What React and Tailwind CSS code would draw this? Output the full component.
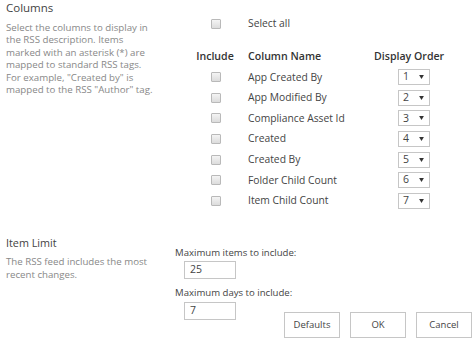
import React from 'react'

const columns = [
  'App Created By',
  'App Modified By',
  'Compliance Asset Id',
  'Created',
  'Created By',
  'Folder Child Count',
  'Item Child Count',
]

const Check = () => (
  <span className="block w-[10px] h-[10px] border border-[#b9b9b9] bg-gradient-to-b from-[#f4f4f4] to-[#dcdcdc] rounded-[1px]" />
)

const OrderSelect = ({ value }) => (
  <div className="w-[32px] h-[16px] border border-[#c6c6c6] bg-white flex items-center justify-between pl-[4px] pr-[5px] text-[10.5px] text-[#444]">
    <span>{value}</span>
    <svg width="5" height="4" viewBox="0 0 6 5">
      <path d="M0 0 L6 0 L3 5 Z" fill="#333" />
    </svg>
  </div>
)

const TextBox = ({ value }) => (
  <div className="w-[52px] h-[18px] border border-[#c6c6c6] bg-white pl-[5px] flex items-center text-[10.5px] text-[#444]">
    {value}
  </div>
)

const Btn = ({ children }) => (
  <button className="w-[56px] h-[26px] border border-[#c6c6c6] bg-white text-[9.5px] text-[#444]">
    {children}
  </button>
)

export default function App() {
  return (
    <div className="w-[475px] h-[342px] bg-white overflow-hidden text-[#444]" style={{ fontFamily: '"Open Sans", "Noto Sans", sans-serif' }}>
      {/* Columns section */}
      <div className="flex">
        <div className="w-[170px] pl-[6px]">
          <h2 className="text-[11.5px] leading-[16px]">Columns</h2>
          <p className="mt-[6px] text-[9.7px] leading-[12.4px] text-[#888] whitespace-nowrap">
            Select the columns to display in<br />
            the RSS description. Items<br />
            marked with an asterisk (*) are<br />
            mapped to standard RSS tags.<br />
            For example, "Created by" is<br />
            mapped to the RSS "Author" tag.
          </p>
        </div>
        <div className="flex-1 pt-[14px]">
          <div className="flex items-center h-[20px]">
            <div className="pl-[41px] w-[78px]"><Check /></div>
            <span className="text-[10.3px]">Select all</span>
          </div>
          <div className="flex items-center h-[20px] mt-[13px] text-[10.6px] font-semibold text-[#333]">
            <div className="ml-[15px] w-[60px] text-center">Include</div>
            <div className="ml-[3px] w-[126px]">Column Name</div>
            <div className="w-[80px]">Display Order</div>
          </div>
          {columns.map((c, i) => (
            <div key={c} className="flex items-center h-[20.6px] text-[10.3px]">
              <div className="pl-[41px] w-[78px]"><Check /></div>
              <div className="w-[150px]">{c}</div>
              <OrderSelect value={i + 1} />
            </div>
          ))}
        </div>
      </div>

      {/* Item limit section */}
      <div className="flex mt-[23px]">
        <div className="w-[170px] pl-[6px] pt-[1px]">
          <h2 className="text-[10.8px] leading-[15px]">Item Limit</h2>
          <p className="mt-[6px] text-[9.7px] leading-[12.4px] text-[#888] whitespace-nowrap">
            The RSS feed includes the most<br />
            recent changes.
          </p>
        </div>
        <div className="flex-1 pl-[5px] pt-[11px]">
          <div className="text-[9.6px] leading-[15px]">Maximum items to include:</div>
          <div className="pl-[9px] mt-[1px]"><TextBox value="25" /></div>
          <div className="text-[9.6px] leading-[15px] mt-[6px]">Maximum days to include:</div>
          <div className="flex items-start">
            <div className="pl-[9px] mt-[2px]"><TextBox value="7" /></div>
            <div className="flex gap-[10px] ml-[48px] mt-[12px]">
              <Btn>Defaults</Btn>
              <Btn>OK</Btn>
              <Btn>Cancel</Btn>
            </div>
          </div>
        </div>
      </div>
    </div>
  )
}
